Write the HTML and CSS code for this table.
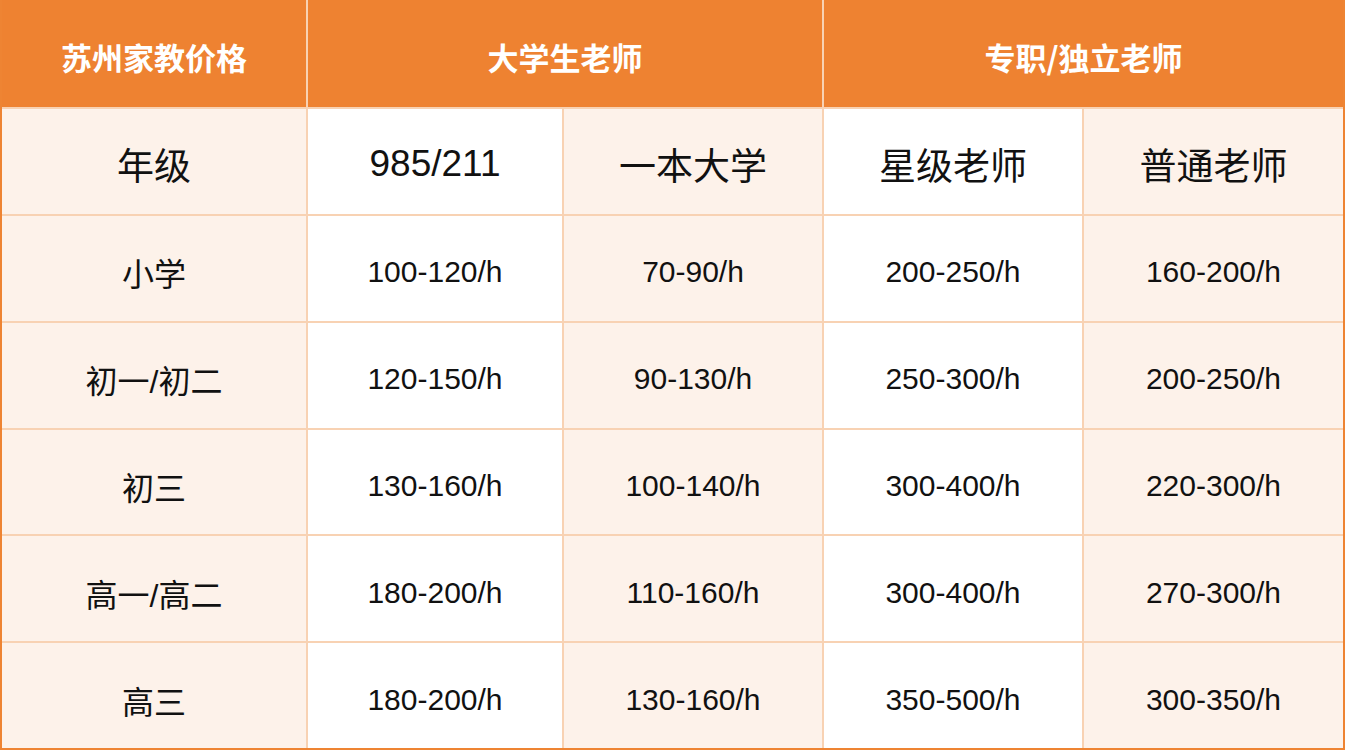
FILE: index.html
```html
<!DOCTYPE html>
<html lang="zh">
<head>
<meta charset="utf-8">
<title>苏州家教价格</title>
<link rel="stylesheet" href="styles.css">
</head>
<body>
<div class="price-table">
  <div class="cell head">苏州家教价格</div>
  <div class="cell head span2">大学生老师</div>
  <div class="cell head span2">专职/独立老师</div>

  <div class="cell sub peach">年级</div>
  <div class="cell sub white">985/211</div>
  <div class="cell sub peach">一本大学</div>
  <div class="cell sub white">星级老师</div>
  <div class="cell sub peach">普通老师</div>

  <div class="cell grade peach">小学</div>
  <div class="cell white">100-120/h</div>
  <div class="cell peach">70-90/h</div>
  <div class="cell white">200-250/h</div>
  <div class="cell peach">160-200/h</div>

  <div class="cell grade peach">初一/初二</div>
  <div class="cell white">120-150/h</div>
  <div class="cell peach">90-130/h</div>
  <div class="cell white">250-300/h</div>
  <div class="cell peach">200-250/h</div>

  <div class="cell grade peach">初三</div>
  <div class="cell white">130-160/h</div>
  <div class="cell peach">100-140/h</div>
  <div class="cell white">300-400/h</div>
  <div class="cell peach">220-300/h</div>

  <div class="cell grade peach">高一/高二</div>
  <div class="cell white">180-200/h</div>
  <div class="cell peach">110-160/h</div>
  <div class="cell white">300-400/h</div>
  <div class="cell peach">270-300/h</div>

  <div class="cell grade peach">高三</div>
  <div class="cell white">180-200/h</div>
  <div class="cell peach">130-160/h</div>
  <div class="cell white">350-500/h</div>
  <div class="cell peach">300-350/h</div>
</div>
</body>
</html>
```

FILE: styles.css
```css
html, body {
  margin: 0;
  padding: 0;
  background: #ffffff;
}

.price-table {
  box-sizing: border-box;
  width: 1345px;
  height: 750px;
  display: grid;
  grid-template-columns: 304px 254px 258px 258px 259px;
  grid-template-rows: 107px repeat(6, 1fr);
  gap: 2px;
  background: #f8d2b3;
  border: 2px solid #ee8433;
  border-top: 0;
  font-family: "Liberation Sans", "Noto Sans CJK SC", sans-serif;
  color: #111111;
}

.cell {
  display: flex;
  align-items: center;
  justify-content: center;
  font-size: 30px;
  padding-top: 8px;
}

.grade {
  font-size: 32px;
}

.head {
  background: #ee8231;
  color: #ffffff;
  font-weight: bold;
  font-size: 31px;
  font-family: "Noto Sans CJK SC", "Liberation Sans", sans-serif;
  padding-top: 6px;
}

.span2 {
  grid-column: span 2;
}

.sub {
  font-size: 37px;
  padding-top: 6px;
}

.peach {
  background: #fdf2ea;
}

.white {
  background: #ffffff;
}
```
